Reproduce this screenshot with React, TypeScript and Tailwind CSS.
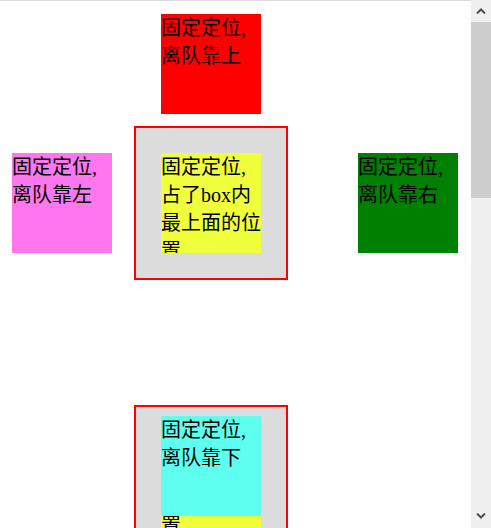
const font = "font-['Liberation_Serif','Noto_Sans_CJK_SC',serif] text-[20px] leading-[28px] text-black";

function Tile({ color, children, className = "" }: { color: string; children: React.ReactNode; className?: string }) {
  return <div className={`h-[100px] w-[100px] shrink-0 overflow-hidden ${color} ${className}`}>{children}</div>;
}

function Chevron({ up }: { up?: boolean }) {
  return (
    <svg width="10" height="6" viewBox="0 0 10 6" className="block">
      <path d={up ? "M1 5.5 L5 1.5 L9 5.5" : "M1 0.5 L5 4.5 L9 0.5"} fill="none" stroke="#505050" strokeWidth="2" />
    </svg>
  );
}

export default function App() {
  return (
    <div className={`flex h-[528px] w-[491px] overflow-hidden bg-white ${font}`}>
      <main className="flex w-[471px] flex-col border-t border-[#dddddd]">
        {/* 靠上 */}
        <Tile color="bg-[#ff0000]" className="ml-[161px] mt-[13px]">
          固定定位,<br />离队靠上
        </Tile>

        <div className="mt-[12px] flex items-start">
          <Tile color="bg-[#ff77ee]" className="ml-[12px] mt-[27px]">
            固定定位,<br />离队靠左
          </Tile>
          <div className="ml-[22px] h-[154px] w-[154px] shrink-0 border-2 border-[#ff0000] bg-[#dcdcdc] pl-[25px] pt-[25px]">
            <Tile color="bg-[#f0ff3c]">固定定位,占了box内最上面的位置</Tile>
          </div>
          <Tile color="bg-[#008000]" className="ml-[70px] mt-[27px]">
            固定定位,<br />离队靠右
          </Tile>
        </div>

        {/* 靠下 */}
        <div className="relative ml-[134px] mt-[125px] h-[154px] w-[154px] shrink-0 border-2 border-[#ff0000] bg-[#dcdcdc] pl-[25px] pt-[21px]">
          <Tile color="bg-[#f0ff3c]">固定定位,占了box内最上面的位置</Tile>
          <Tile color="bg-[#5ffff0]" className="absolute left-[25px] top-[9px]">
            固定定位,<br />离队靠下
          </Tile>
        </div>
      </main>

      <div className="flex w-[20px] flex-col bg-[#f0f0f0]">
        <div className="flex h-[22px] items-center justify-center">
          <Chevron up />
        </div>
        <div className="h-[176px] bg-[#cdcdcd]" />
        <div className="flex-1" />
        <div className="flex h-[24px] items-center justify-center">
          <Chevron />
        </div>
      </div>
    </div>
  );
}
